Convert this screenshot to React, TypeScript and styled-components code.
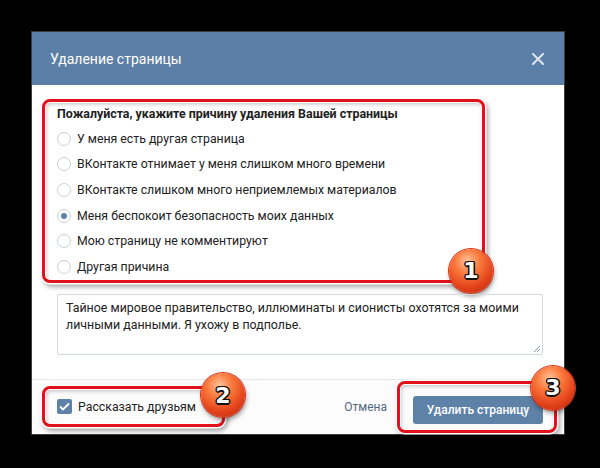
import styled, { createGlobalStyle } from 'styled-components'

const reasons = [
  'У меня есть другая страница',
  'ВКонтакте отнимает у меня слишком много времени',
  'ВКонтакте слишком много неприемлемых материалов',
  'Меня беспокоит безопасность моих данных',
  'Мою страницу не комментируют',
  'Другая причина',
]

const GlobalStyle = createGlobalStyle`
  body {
    margin: 0;
    background: #000;
    font-family: Roboto, "Noto Sans", "Liberation Sans", sans-serif;
  }
`

const Page = styled.div`
  width: 600px;
  height: 468px;
  background: #000;
  padding: 32px 0 0 32px;
  box-sizing: border-box;
  overflow: hidden;
`

const Dialog = styled.div`
  width: 532px;
  background: #fff;
  box-shadow: 0 0 0 1px #3c3c3c;
`

const Header = styled.div`
  height: 53px;
  background: #5b7fa6;
  display: flex;
  align-items: center;
  justify-content: space-between;
  padding: 0 20px 0 18px;
`

const Title = styled.div`
  color: #fff;
  font-size: 14px;
`

const Close = styled.div`
  display: flex;
  opacity: 0.8;
`

const Body = styled.div`
  padding: 14px 21px 24px 25px;
`

const Highlight = styled.div<{ $pad: string }>`
  position: relative;
  border: 3px solid #e2121b;
  border-radius: 8px;
  padding: ${p => p.$pad};
  box-shadow: 0 0 0 1.5px #fff, 2px 3px 5px 1px rgba(0, 0, 0, 0.35),
    inset 0 0 0 1px #fff, inset 1px 2px 4px rgba(0, 0, 0, 0.25);
`

const ReasonBox = styled(Highlight)`
  margin-left: -15px;
  width: 443px;
  box-sizing: border-box;
`

const Question = styled.div`
  font-size: 12.4px;
  font-weight: 700;
  line-height: 20px;
  color: #222;
  margin-bottom: 2px;
`

const Row = styled.div`
  height: 25.6px;
  display: flex;
  align-items: center;
  gap: 6px;
  font-size: 12.3px;
  color: #222;
`

const Radio = styled.span<{ $on?: boolean }>`
  width: 12px;
  height: 12px;
  border-radius: 50%;
  border: 1px solid #c8d0da;
  display: flex;
  align-items: center;
  justify-content: center;
  &::after {
    content: '';
    width: 6px;
    height: 6px;
    border-radius: 50%;
    background: ${p => (p.$on ? '#5e81a8' : 'transparent')};
  }
`

const TextBox = styled.div`
  position: relative;
  margin-top: 11px;
  height: 61px;
  border: 1px solid #d3d9de;
  border-radius: 2px;
  padding: 4px 10px 0 8px;
  box-sizing: border-box;
  font-size: 12.4px;
  line-height: 17px;
  color: #222;
`

const Grip = styled.svg`
  position: absolute;
  right: 1px;
  bottom: 1px;
`

const Footer = styled.div`
  height: 55px;
  border-top: 1px solid #e7e8ec;
  background: #fcfcfd;
  display: flex;
  align-items: center;
  justify-content: space-between;
  padding: 0 7px 0 10px;
  box-sizing: border-box;
`

const CheckLabel = styled.div`
  display: flex;
  align-items: center;
  gap: 6px;
  font-size: 12.3px;
  color: #222;
`

const Check = styled.span`
  width: 15px;
  height: 15px;
  border-radius: 2px;
  background: #5e81a8;
  display: flex;
  align-items: center;
  justify-content: center;
`

const Actions = styled.div`
  display: flex;
  align-items: center;
  gap: 10px;
`

const Cancel = styled.span`
  font-size: 12px;
  color: #55677d;
`

const Button = styled.div`
  width: 130px;
  height: 28px;
  background: #5e81a8;
  border-radius: 3px;
  color: #fff;
  font-size: 12px;
  font-weight: 500;
  display: flex;
  align-items: center;
  justify-content: center;
`

const Badge = styled.div<{ $top?: number; $bottom?: number; $right: number }>`
  position: absolute;
  ${p => (p.$top !== undefined ? `top: ${p.$top}px;` : `bottom: ${p.$bottom}px;`)}
  right: ${p => p.$right}px;
  width: 44px;
  height: 44px;
  border-radius: 50%;
  background: radial-gradient(circle at 42% 28%, #ffc39a 0%, #fb7b3e 30%, #e2421a 65%, #b7250b 100%);
  box-shadow: 0 0 0 1px #d8361a, 1px 3px 5px rgba(0, 0, 0, 0.45);
  display: flex;
  align-items: center;
  justify-content: center;
  font-family: "DejaVu Sans", sans-serif;
  font-weight: 700;
  font-size: 22px;
  color: #fff;
  text-shadow: -1.5px 0 #111, 1.5px 0 #111, 0 -1.5px #111, 0 1.5px #111,
    -1px -1px #111, 1px 1px #111, -1px 1px #111, 1px -1px #111;
`

export default function App() {
  return (
    <Page>
      <GlobalStyle />
      <Dialog>
        <Header>
          <Title>Удаление страницы</Title>
          <Close>
            <svg width="12" height="12" viewBox="0 0 12 12">
              <path d="M1 1L11 11M11 1L1 11" stroke="#fff" strokeWidth="2" strokeLinecap="round" />
            </svg>
          </Close>
        </Header>

        <Body>
          <ReasonBox $pad="2px 12px 0 12px">
            <Question>Пожалуйста, укажите причину удаления Вашей страницы</Question>
            {reasons.map((r, i) => (
              <Row key={r}>
                <Radio $on={i === 3} />
                {r}
              </Row>
            ))}
            <Badge $bottom={-13} $right={-11}>1</Badge>
          </ReasonBox>

          <TextBox>
            Тайное мировое правительство, иллюминаты и сионисты охотятся за моими личными данными. Я ухожу в подполье.
            <Grip width="8" height="8" viewBox="0 0 8 8">
              <path d="M7 1L1 7M7 4L4 7" stroke="#8a8f96" strokeWidth="1" />
            </Grip>
          </TextBox>
        </Body>

        <Footer>
          <Highlight $pad="10px 26px 10px 12px">
            <CheckLabel>
              <Check>
                <svg width="11" height="9" viewBox="0 0 11 9">
                  <path d="M1 4.5L4 7.5L10 1.5" fill="none" stroke="#fff" strokeWidth="1.8" />
                </svg>
              </Check>
              Рассказать друзьям
            </CheckLabel>
            <Badge $top={-16} $right={-23}>2</Badge>
          </Highlight>

          <Actions>
            <Cancel>Отмена</Cancel>
            <Highlight $pad="12px 11px 6px 13px">
              <Button>Удалить страницу</Button>
              <Badge $top={-18} $right={-21}>3</Badge>
            </Highlight>
          </Actions>
        </Footer>
      </Dialog>
    </Page>
  )
}
